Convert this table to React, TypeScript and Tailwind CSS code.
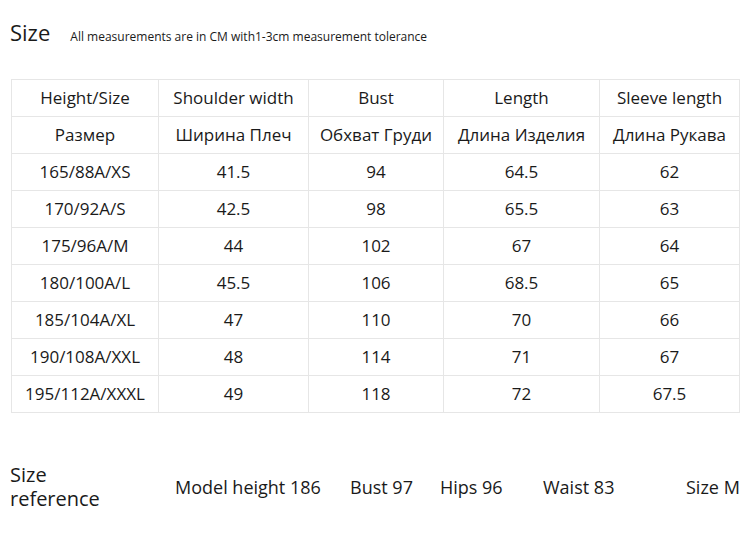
import React from "react";

const rows: string[][] = [
  ["Height/Size", "Shoulder width", "Bust", "Length", "Sleeve length"],
  ["Размер", "Ширина Плеч", "Обхват Груди", "Длина Изделия", "Длина Рукава"],
  ["165/88A/XS", "41.5", "94", "64.5", "62"],
  ["170/92A/S", "42.5", "98", "65.5", "63"],
  ["175/96A/M", "44", "102", "67", "64"],
  ["180/100A/L", "45.5", "106", "68.5", "65"],
  ["185/104A/XL", "47", "110", "70", "66"],
  ["190/108A/XXL", "48", "114", "71", "67"],
  ["195/112A/XXXL", "49", "118", "72", "67.5"],
];

const widths = ["w-[147px]", "w-[150px]", "w-[135px]", "w-[156px]", "w-[140px]"];

export default function App() {
  return (
    <div
      className="w-[750px] h-[536px] bg-white text-[#1a1a1a] overflow-hidden"
      style={{ fontFamily: '"Open Sans", "Noto Sans", sans-serif' }}
    >
      <div className="flex items-baseline pl-[10px] pt-[21px] h-[79px]">
        <span className="text-[22px] leading-none">Size</span>
        <span className="ml-[20px] text-[12px] leading-none">
          All measurements are in CM with1-3cm measurement tolerance
        </span>
      </div>
      <table className="ml-[11px] border-collapse text-[17px]">
        <tbody>
          {rows.map((r, i) => (
            <tr key={i} className="h-[37px]">
              {r.map((c, j) => (
                <td
                  key={j}
                  className={`${widths[j]} border border-[#e6e6e6] text-center p-0 whitespace-nowrap`}
                >
                  {c}
                </td>
              ))}
            </tr>
          ))}
        </tbody>
      </table>
      <div className="flex items-center mt-[50px] pl-[10px] text-[18px]">
        <div className="w-[165px] text-[20px]">
          <div className="leading-[24px]">Size</div>
          <div className="leading-[24px]">reference</div>
        </div>
        <span className="w-[175px]">Model height 186</span>
        <span className="w-[90px]">Bust 97</span>
        <span className="w-[103px]">Hips 96</span>
        <span className="w-[143px]">Waist 83</span>
        <span>Size M</span>
      </div>
    </div>
  );
}
